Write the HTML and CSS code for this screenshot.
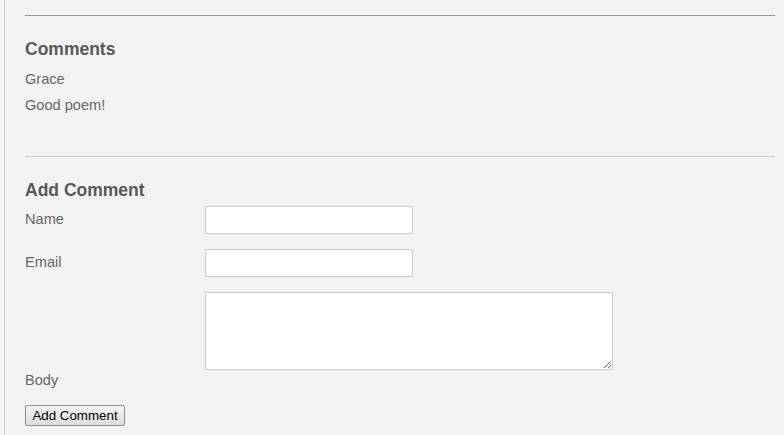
FILE: index.html
```
<!DOCTYPE html>
<html>
<head>
<meta charset="utf-8">
<link rel="stylesheet" href="styles.css">
</head>
<body>
<div class="page">
  <hr class="rule rule-dark">
  <h3 class="heading heading-comments">Comments</h3>
  <p class="text text-author">Grace</p>
  <p class="text text-body">Good poem!</p>
  <hr class="rule rule-light">
  <h3 class="heading heading-add">Add Comment</h3>
  <form class="form">
    <div class="row">
      <label class="label" for="name">Name</label>
      <input class="input" id="name" type="text">
    </div>
    <div class="row">
      <label class="label" for="email">Email</label>
      <input class="input" id="email" type="text">
    </div>
    <div class="row row-body">
      <label class="label label-body" for="body">Body</label>
      <textarea class="textarea" id="body"></textarea>
    </div>
    <button class="button" type="button">Add Comment</button>
  </form>
</div>
</body>
</html>
```
FILE: styles.css
```
html, body {
  margin: 0;
  padding: 0;
  background: #f3f3f3;
}
body {
  font-family: "Liberation Sans", Arial, sans-serif;
  color: #666;
  height: 435px;
  overflow: hidden;
}
.page {
  margin-left: 4px;
  border-left: 1px solid #cfcfcf;
  padding: 15px 0 0 20px;
  width: 750px;
  min-height: 420px;
}
.rule {
  margin: 0;
  border: 0;
  height: 0;
}
.rule-dark {
  border-top: 1px solid #9a9a9a;
}
.rule-light {
  border-top: 1px solid #cccccc;
  margin-top: 42px;
}
.heading {
  margin: 23px 0 0;
  font-size: 17.5px;
  line-height: 20px;
  font-weight: bold;
  color: #585858;
}
.text {
  margin: 0;
  font-size: 14.6px;
  line-height: 18px;
}
.text-author {
  margin-top: 11px;
}
.text-body {
  margin-top: 8px;
}
.form {
  margin: 0;
  padding-top: 6px;
}
.row {
  display: flex;
  align-items: flex-start;
  margin-bottom: 15px;
}
.label {
  width: 180px;
  font-size: 14.6px;
  line-height: 18px;
  padding-top: 4px;
}
.input {
  box-sizing: border-box;
  width: 208px;
  height: 28px;
  margin: 0;
  border: 1px solid #cccccc;
  background: #fff;
  padding: 2px 4px;
}
.row-body {
  align-items: flex-end;
  margin-bottom: 16px;
}
.label-body {
  padding-top: 0;
}
.textarea {
  box-sizing: border-box;
  width: 408px;
  height: 78px;
  margin: 0 0 19px;
  border: 1px solid #cccccc;
  background: #fff;
  padding: 2px;
}
.button {
  box-sizing: border-box;
  height: 21px;
  width: 100px;
  margin: 0;
  padding: 0 6px;
  font-family: "Liberation Sans", Arial, sans-serif;
  font-size: 13.33px;
  color: #000;
  border: 1px solid #8e8e8e;
  border-radius: 2px;
  background: linear-gradient(#f4f4f4, #dedede);
}
```
